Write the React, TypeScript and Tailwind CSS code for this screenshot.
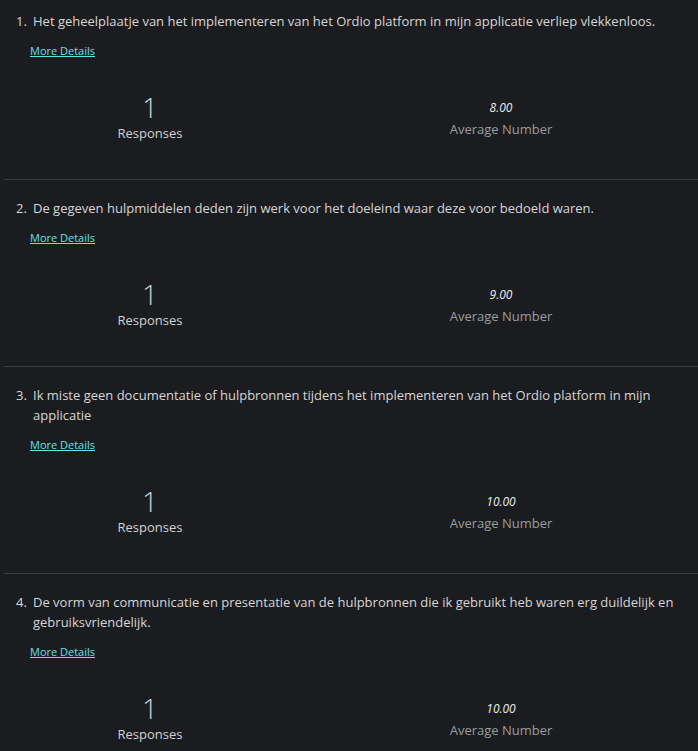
const questions = [
  {
    text: "Het geheelplaatje van het implementeren van het Ordio platform in mijn applicatie verliep vlekkenloos.",
    responses: 1,
    average: "8.00",
  },
  {
    text: "De gegeven hulpmiddelen deden zijn werk voor het doeleind waar deze voor bedoeld waren.",
    responses: 1,
    average: "9.00",
  },
  {
    text: "Ik miste geen documentatie of hulpbronnen tijdens het implementeren van het Ordio platform in mijn applicatie",
    responses: 1,
    average: "10.00",
  },
  {
    text: "De vorm van communicatie en presentatie van de hulpbronnen die ik gebruikt heb waren erg duildelijk en gebruiksvriendelijk.",
    responses: 1,
    average: "10.00",
  },
];

function QuestionSummary({ index, text, responses, average, first }: { index: number; text: string; responses: number; average: string; first: boolean }) {
  return (
    <section className={first ? "pt-[11px] pb-[36px]" : "border-t border-[#3a3b3e] pt-[18px] pb-[36px]"}>
      <div className="flex pl-3 pr-2 text-[13px] leading-5 text-[#d6d6d6]">
        <span className="w-[17px] shrink-0">{index}.</span>
        <p>{text}</p>
      </div>
      <a href="#" className="mt-3 ml-[26px] inline-block text-[11px] leading-4 text-[#5fe3ea] underline">
        More Details
      </a>
      <div className="mt-[31px] flex">
        <div className="flex w-[292px] flex-col items-center">
          <span className="text-[28px] font-light leading-[31px] text-[#c9d3dc]">{responses}</span>
          <span className="text-[13px] leading-5 text-[#d2d2d2]">Responses</span>
        </div>
        <div className="flex flex-1 flex-col items-center pl-2">
          <span className="pt-[5px] text-[12px] italic leading-[22px] text-[#ececec]">{average}</span>
          <span className="text-[13px] leading-5 text-[#9c9c9c]">Average Number</span>
        </div>
      </div>
    </section>
  );
}

export default function App() {
  return (
    <div className="min-h-screen bg-[#1b1c1f] pl-1 font-['Open_Sans',sans-serif]">
      {questions.map((q, i) => (
        <QuestionSummary key={i} index={i + 1} first={i === 0} {...q} />
      ))}
    </div>
  );
}
